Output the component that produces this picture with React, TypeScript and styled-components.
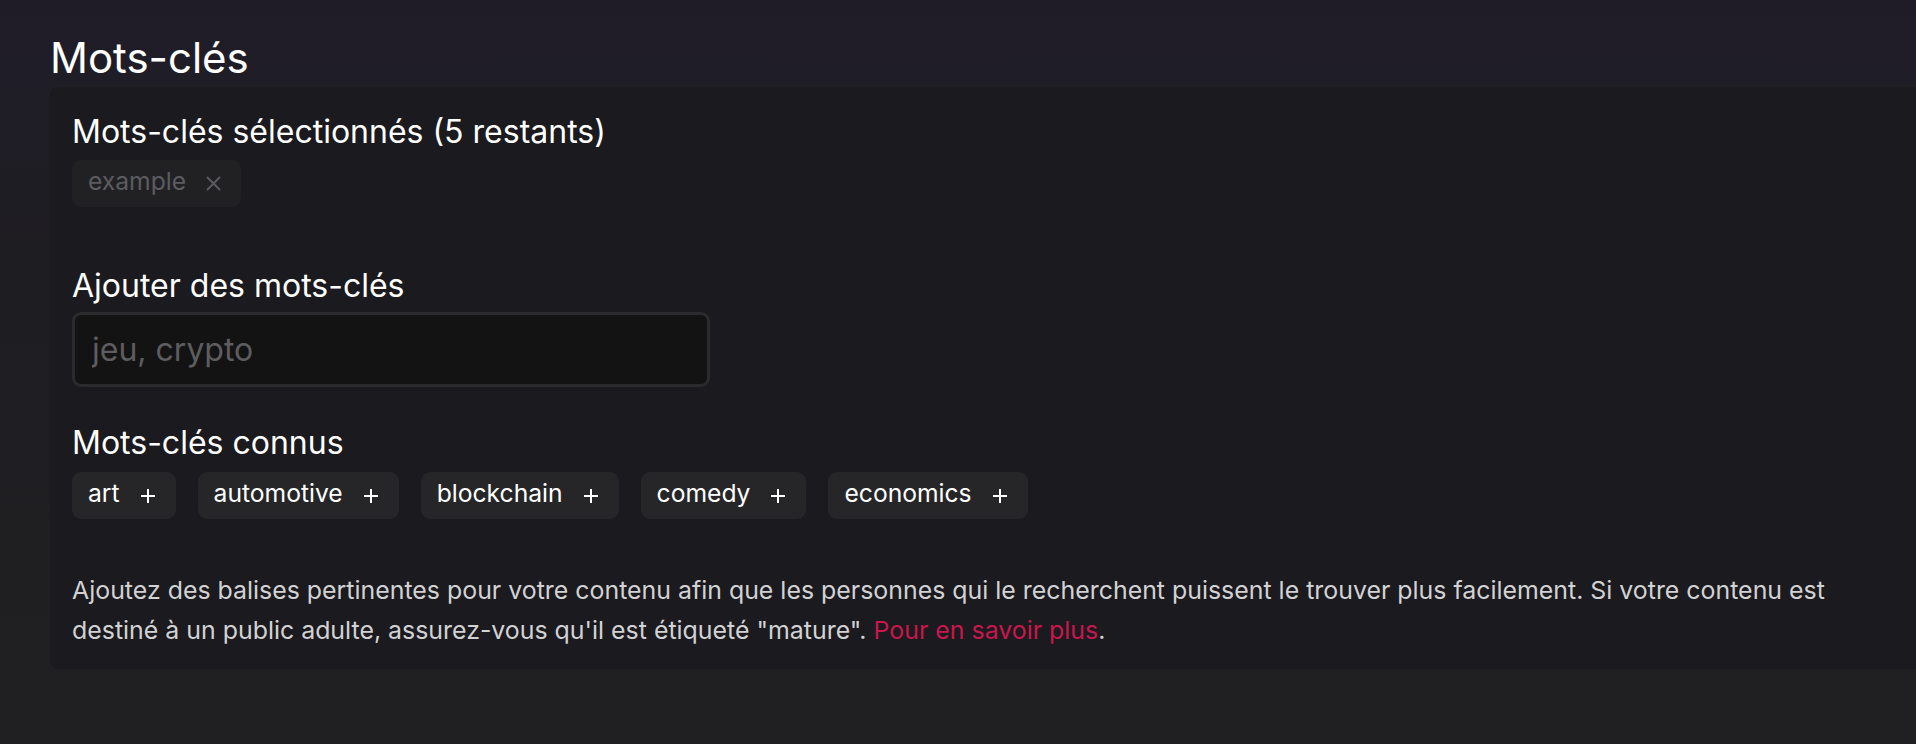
import React from "react";
import styled, { createGlobalStyle } from "styled-components";

const Global = createGlobalStyle`
  html, body { margin: 0; padding: 0; }
  body {
    width: 1916px;
    height: 744px;
    overflow: hidden;
    font-family: Inter, "Noto Sans", sans-serif;
    color: #ffffff;
    background: linear-gradient(180deg, #1f1c28 0px, #1f1d26 90px, #1e1d21 300px, #202022 744px);
  }
`;

const Page = styled.main`
  display: flex;
  flex-direction: column;
  padding: 33px 0 0 50px;
`;

const Title = styled.h1`
  margin: 0 0 4px 0;
  font-size: 42px;
  font-weight: 400;
  line-height: 50px;
  color: #ffffff;
`;

const Panel = styled.section`
  display: flex;
  flex-direction: column;
  align-items: flex-start;
  background: #1b1a1e;
  border-radius: 8px 0 0 8px;
  padding: 26px 12px 19px 22px;
`;

const Label = styled.h2<{ $gap: number }>`
  margin: 0 0 ${(p) => p.$gap}px 0;
  font-size: 32px;
  font-weight: 400;
  line-height: 38px;
  color: #ffffff;
`;

const ChipRow = styled.div<{ $after: number }>`
  display: flex;
  flex-wrap: wrap;
  gap: 22px;
  margin-bottom: ${(p) => p.$after}px;
`;

const Chip = styled.button<{ $muted?: boolean }>`
  display: inline-flex;
  align-items: center;
  gap: 20px;
  height: 47px;
  padding: 0 20px 0 16px;
  border: none;
  border-radius: 9px;
  background: ${(p) => (p.$muted ? "#212124" : "#262628")};
  color: ${(p) => (p.$muted ? "#5c5c60" : "#ffffff")};
  font-family: inherit;
  font-size: 24.65px;
  line-height: 1;
  cursor: pointer;
  svg { flex: none; }
`;

const ChipText = styled.span`
  padding-bottom: 5px;
`;

const Input = styled.input`
  box-sizing: border-box;
  width: 638px;
  height: 75px;
  margin: 0 0 37px 0;
  padding: 0 17px;
  border: 3px solid #2b2b2d;
  border-radius: 9px;
  background: #131314;
  color: #ffffff;
  font-family: inherit;
  font-size: 32px;
  outline: none;
  &::placeholder { color: #5d5d5f; }
`;

const Help = styled.p`
  margin: 0;
  font-size: 24.9px;
  line-height: 40px;
  color: #d2d2d4;
`;

const Link = styled.a`
  color: #c8174d;
  text-decoration: none;
`;

const PlusIcon = () => (
  <svg width="16" height="16" viewBox="0 0 16 16" fill="none" stroke="currentColor" strokeWidth="2">
    <path d="M8 1v14M1 8h14" />
  </svg>
);

const CloseIcon = () => (
  <svg width="15" height="15" viewBox="0 0 15 15" fill="none" stroke="currentColor" strokeWidth="1.8" strokeLinecap="round">
    <path d="M1.5 1.5l12 12M13.5 1.5l-12 12" />
  </svg>
);

const known = ["art", "automotive", "blockchain", "comedy", "economics"];

export default function App() {
  return (
    <>
      <Global />
      <Page>
        <Title>Mots-clés</Title>
        <Panel>
          <Label $gap={9}>Mots-clés sélectionnés (5 restants)</Label>
          <ChipRow $after={60}>
            <Chip $muted>
              <ChipText>example</ChipText>
              <CloseIcon />
            </Chip>
          </ChipRow>
          <Label $gap={7}>Ajouter des mots-clés</Label>
          <Input placeholder="jeu, crypto" />
          <Label $gap={10}>Mots-clés connus</Label>
          <ChipRow $after={51}>
            {known.map((k) => (
              <Chip key={k}>
                <ChipText>{k}</ChipText>
                <PlusIcon />
              </Chip>
            ))}
          </ChipRow>
          <Help>
            Ajoutez des balises pertinentes pour votre contenu afin que les personnes qui le recherchent puissent le
            trouver plus facilement. Si votre contenu est destiné à un public adulte, assurez-vous qu'il est étiqueté
            "mature". <Link href="#">Pour en savoir plus</Link>.
          </Help>
        </Panel>
      </Page>
    </>
  );
}
